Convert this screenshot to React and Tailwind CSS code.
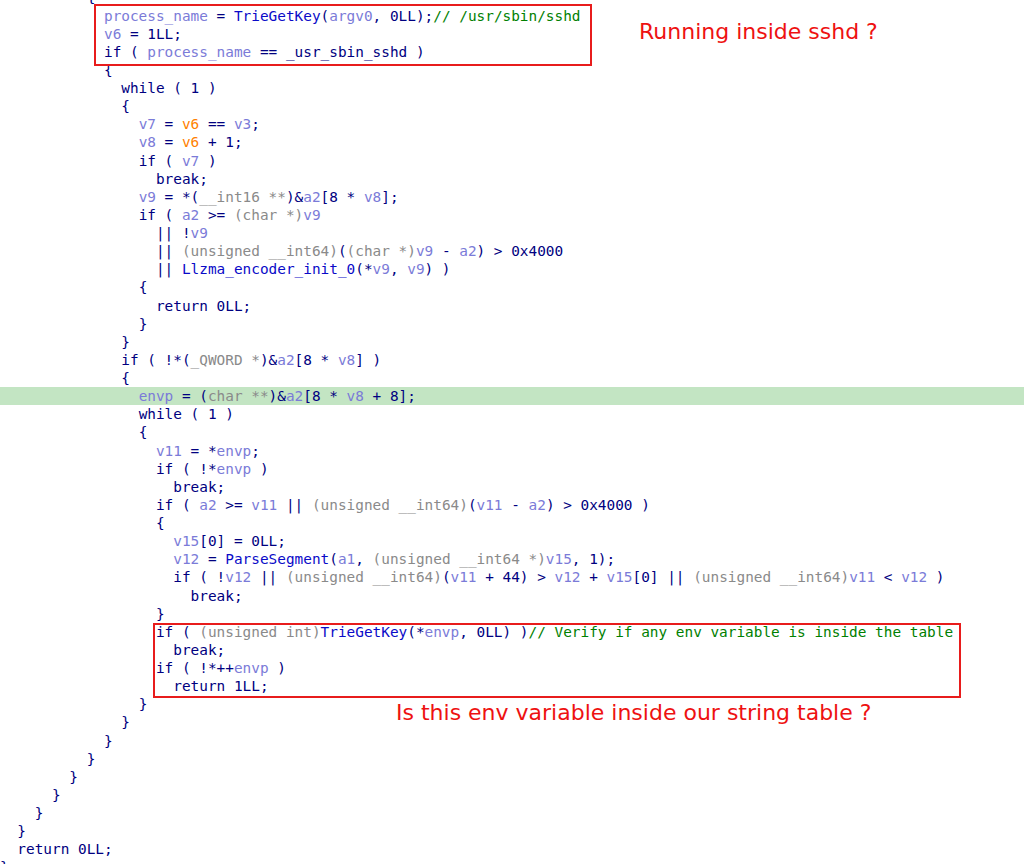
import React from 'react'

const colors = {
  n: 'text-[#000080]',
  v: 'text-[#7b7bd8]',
  f: 'text-[#0a0ac8]',
  g: 'text-[#8a8a8a]',
  c: 'text-[#008000]',
  o: 'text-[#ff8000]',
}

// [indent, source]; «x text» marks a coloured token, rest is navy
const lines = [
  [10, '{'],
  [12, '«v process_name» = «f TrieGetKey»(«v argv0», 0LL);«c // /usr/sbin/sshd»'],
  [12, '«v v6» = 1LL;'],
  [12, 'if ( «v process_name» == _usr_sbin_sshd )'],
  [12, '{'],
  [14, 'while ( 1 )'],
  [14, '{'],
  [16, '«v v7» = «o v6» == «v v3»;'],
  [16, '«v v8» = «o v6» + 1;'],
  [16, 'if ( «v v7» )'],
  [18, 'break;'],
  [16, '«v v9» = *(«g __int16 **»)&«v a2»[8 * «v v8»];'],
  [16, 'if ( «v a2» >= «g (char *)»«v v9»'],
  [18, '|| !«v v9»'],
  [18, '|| «g (unsigned __int64)»(«g (char *)»«v v9» - «v a2») > 0x4000'],
  [18, '|| «f Llzma_encoder_init_0»(*«v v9», «v v9») )'],
  [16, '{'],
  [18, 'return 0LL;'],
  [16, '}'],
  [14, '}'],
  [14, 'if ( !*(«g _QWORD *»)&«v a2»[8 * «v v8»] )'],
  [14, '{'],
  [16, '«v envp» = («g char **»)&«v a2»[8 * «v v8» + 8];', true],
  [16, 'while ( 1 )'],
  [16, '{'],
  [18, '«v v11» = *«v envp»;'],
  [18, 'if ( !*«v envp» )'],
  [20, 'break;'],
  [18, 'if ( «v a2» >= «v v11» || «g (unsigned __int64)»(«v v11» - «v a2») > 0x4000 )'],
  [18, '{'],
  [20, '«v v15»[0] = 0LL;'],
  [20, '«v v12» = «f ParseSegment»(«v a1», «g (unsigned __int64 *)»«v v15», 1);'],
  [20, 'if ( !«v v12» || «g (unsigned __int64)»(«v v11» + 44) > «v v12» + «v v15»[0] || «g (unsigned __int64)»«v v11» < «v v12» )'],
  [22, 'break;'],
  [18, '}'],
  [18, 'if ( «g (unsigned int)»«f TrieGetKey»(*«v envp», 0LL) )«c // Verify if any env variable is inside the table»'],
  [20, 'break;'],
  [18, 'if ( !*++«v envp» )'],
  [20, 'return 1LL;'],
  [16, '}'],
  [14, '}'],
  [12, '}'],
  [10, '}'],
  [8, '}'],
  [6, '}'],
  [4, '}'],
  [2, '}'],
  [2, 'return 0LL;'],
  [0, '}'],
]

function tokens(src) {
  const out = []
  const re = /«(\w) ([^»]*)»/g
  let last = 0
  let m
  while ((m = re.exec(src))) {
    if (m.index > last) out.push(['n', src.slice(last, m.index)])
    out.push([m[1], m[2]])
    last = re.lastIndex
  }
  if (last < src.length) out.push(['n', src.slice(last)])
  return out
}

const CodeLine = ({ indent, src, hl }) => (
  <div className={hl ? 'h-[18.13px] bg-[#c3e5c3]' : 'h-[18.13px]'}>
    {' '.repeat(indent)}
    {tokens(src).map(([k, t], i) => (
      <span key={i} className={colors[k]}>{t}</span>
    ))}
  </div>
)

export default function App() {
  return (
    <div className="relative w-[1024px] h-[864px] overflow-hidden bg-white">
      <div className="mt-[-11.6px] whitespace-pre font-['DejaVu_Sans_Mono',monospace] text-[14.4px] leading-[18.13px] text-[#000080]">
        {lines.map(([indent, src, hl], i) => (
          <CodeLine key={i} indent={indent} src={src} hl={hl} />
        ))}
      </div>

      {/* annotation boxes */}
      <div className="absolute left-[94px] top-[4px] w-[498px] h-[62px] border-2 border-[#e81c1c]" />
      <div className="absolute left-[153px] top-[623px] w-[808px] h-[75px] border-2 border-[#e81c1c]" />

      <div className="absolute left-[639px] top-[21px] font-['DejaVu_Sans',sans-serif] text-[22px] leading-[22px] text-[#ee1111]">
        Running inside sshd ?
      </div>
      <div className="absolute left-[396px] top-[702px] font-['DejaVu_Sans',sans-serif] text-[22px] leading-[22px] text-[#ee1111]">
        Is this env variable inside our string table ?
      </div>
    </div>
  )
}
